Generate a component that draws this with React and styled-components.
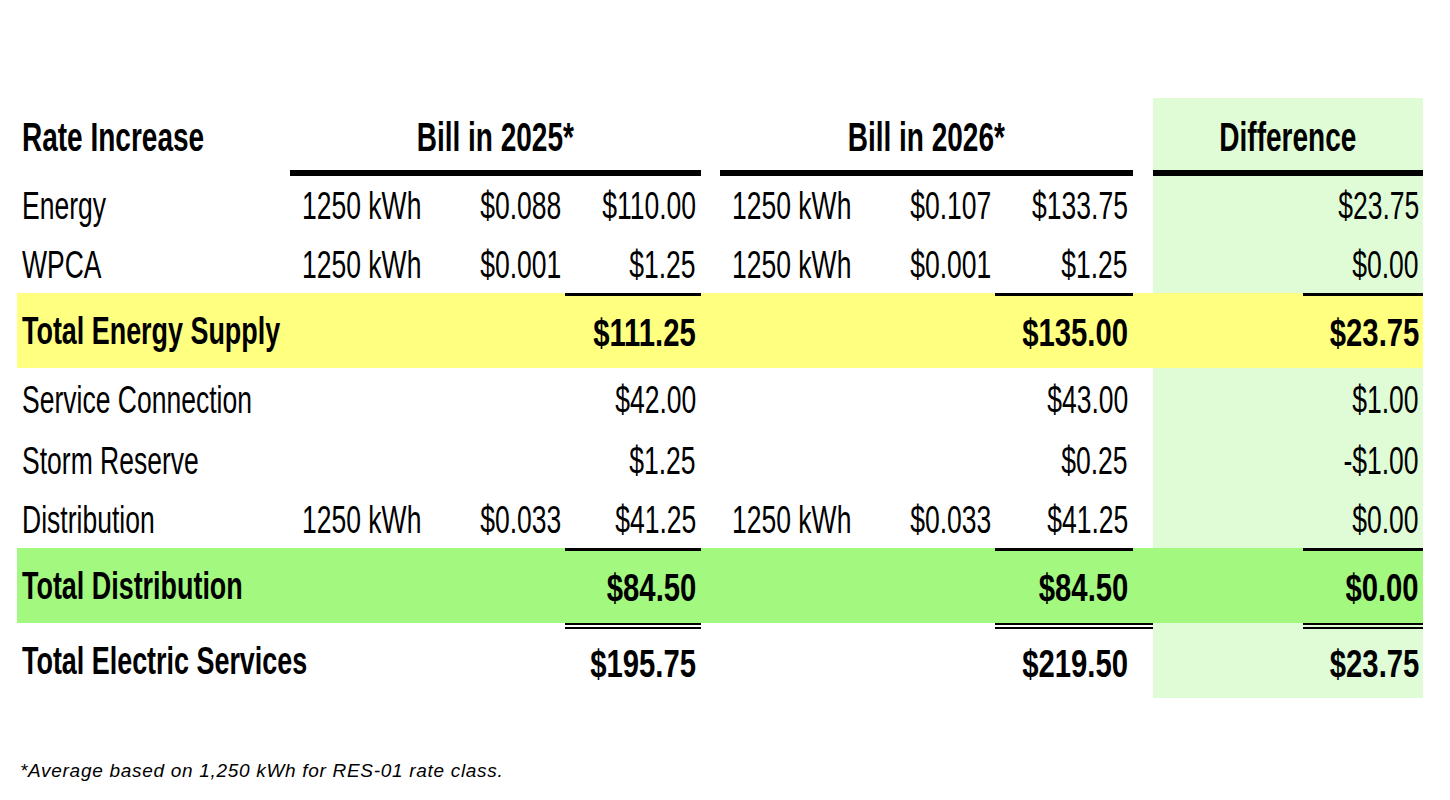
import React from 'react'
import styled, { createGlobalStyle, css } from 'styled-components'

const GlobalStyle = createGlobalStyle`
    html, body {
        margin: 0;
        padding: 0;
        background: #ffffff;
    }
    body {
        font-family: "Liberation Sans", Arial, sans-serif;
        color: #000000;
    }
`

// column tracks: label | kWh rate amount | gap | kWh rate amount | gap | diff-pad diff
const COLUMNS = '273px 140px 135px 136px 19px 140px 135px 138px 20px 150px 120px'

const YELLOW = '#ffff80'
const GREEN = '#a3f880'
const MINT = '#dffcd7'

const Page = styled.div`
    padding: 98px 0 0 17px;
    width: 1406px;
`

const Grid = styled.div`
    display: grid;
    grid-template-columns: ${ COLUMNS };
    height: ${ ( { $height } ) => $height }px;
    background: ${ ( { $fill } ) => $fill || 'transparent' };
`

const Cell = styled.div`
    display: flex;
    align-items: center;
    justify-content: ${ ( { $align } ) => $align == 'right' ? 'flex-end' : $align == 'center' ? 'center' : 'flex-start' };
    padding-left: ${ ( { $padL } ) => $padL || 0 }px;
    padding-right: ${ ( { $padR } ) => $padR || 0 }px;
    grid-column: ${ ( { $col } ) => $col };
    background: ${ ( { $shade } ) => $shade ? MINT : 'transparent' };
    white-space: nowrap;
    min-width: 0;

    ${ ( { $rule } ) => $rule == 'single' && css`
        border-top: 3px solid #000;
    ` }
    ${ ( { $rule } ) => $rule == 'double' && css`
        border-top: 6px double #000;
    ` }
`

const HeadCell = styled( Cell )`
    padding-top: 6px;
    border-bottom: 6px solid ${ ( { $underline } ) => $underline ? '#000' : 'transparent' };
`

// condensed face, done by squeezing a regular sans
const Txt = styled.span`
    display: inline-block;
    font-size: ${ ( { $size } ) => $size || 39 }px;
    font-weight: ${ ( { $bold } ) => $bold ? 700 : 400 };
    line-height: 1;
    transform: scaleX(${ ( { $scale } ) => $scale });
    transform-origin: ${ ( { $align } ) => $align == 'right' ? 'right' : $align == 'center' ? 'center' : 'left' } center;
`

const Footnote = styled.p`
    margin: 62px 0 0 3px;
    font-size: 19px;
    line-height: 22px;
    font-style: italic;
    letter-spacing: 0.7px;
`

const rows = [
    { label: 'Energy', height: 59, y25: [ '1250 kWh', '$0.088', '$110.00' ], y26: [ '1250 kWh', '$0.107', '$133.75' ], diff: '$23.75' },
    { label: 'WPCA', height: 58, y25: [ '1250 kWh', '$0.001', '$1.25' ], y26: [ '1250 kWh', '$0.001', '$1.25' ], diff: '$0.00' },
    { label: 'Total Energy Supply', height: 75, fill: YELLOW, bold: true, rule: 'single', y25: [ '', '', '$111.25' ], y26: [ '', '', '$135.00' ], diff: '$23.75' },
    { label: 'Service Connection', height: 62, y25: [ '', '', '$42.00' ], y26: [ '', '', '$43.00' ], diff: '$1.00' },
    { label: 'Storm Reserve', height: 60, y25: [ '', '', '$1.25' ], y26: [ '', '', '$0.25' ], diff: '-$1.00' },
    { label: 'Distribution', height: 58, y25: [ '1250 kWh', '$0.033', '$41.25' ], y26: [ '1250 kWh', '$0.033', '$41.25' ], diff: '$0.00' },
    { label: 'Total Distribution', height: 75, fill: GREEN, bold: true, rule: 'single', y25: [ '', '', '$84.50' ], y26: [ '', '', '$84.50' ], diff: '$0.00' },
    { label: 'Total Electric Services', height: 75, bold: true, rule: 'double', y25: [ '', '', '$195.75' ], y26: [ '', '', '$219.50' ], diff: '$23.75' },
]

const Label = ( { children, bold } ) =>
    <Txt $bold={ bold } $scale={ bold ? 0.69 : 0.68 } $align="left">{ children }</Txt>

const Num = ( { children, bold, align = 'right' } ) =>
    <Txt $bold={ bold } $scale={ bold ? 0.75 : 0.68 } $align={ align }>{ children }</Txt>

const YearCells = ( { values, start, bold, rule } ) => <>
    <Cell $col={ start } $padL={ 12 }>{ values[0] && <Num align="left">{ values[0] }</Num> }</Cell>
    <Cell $col={ start + 1 } $align="right" $padR={ 4 }>{ values[1] && <Num>{ values[1] }</Num> }</Cell>
    <Cell $col={ start + 2 } $align="right" $padR={ 5 } $rule={ rule }>
        { values[2] && <Num bold={ bold }>{ values[2] }</Num> }
    </Cell>
</>

const Row = ( { row } ) => {
    const { label, height, fill, bold, rule } = row
    return (
        <Grid $height={ height } $fill={ fill }>
            <Cell $col={ 1 } $padL={ 5 }><Label bold={ bold }>{ label }</Label></Cell>
            <YearCells values={ row.y25 } start={ 2 } bold={ bold } rule={ rule } />
            <Cell $col={ 5 } />
            <YearCells values={ row.y26 } start={ 6 } bold={ bold } rule={ rule } />
            <Cell $col={ 9 } $rule={ rule == 'double' ? 'double' : undefined } />
            <Cell $col={ 10 } $shade={ !fill } />
            <Cell $col={ 11 } $shade={ !fill } $align="right" $padR={ 4 } $rule={ rule }>
                <Num bold={ bold }>{ row.diff }</Num>
            </Cell>
        </Grid>
    )
}

const HeaderRow = () =>
    <Grid $height={ 78 }>
        <HeadCell $col={ 1 } $padL={ 5 }>
            <Txt $bold $size={ 40 } $scale={ 0.7 } $align="left">Rate Increase</Txt>
        </HeadCell>
        <HeadCell $col="2 / span 3" $align="center" $underline>
            <Txt $bold $size={ 40 } $scale={ 0.7 } $align="center">Bill in 2025*</Txt>
        </HeadCell>
        <HeadCell $col="6 / span 3" $align="center" $underline>
            <Txt $bold $size={ 40 } $scale={ 0.7 } $align="center">Bill in 2026*</Txt>
        </HeadCell>
        <HeadCell $col="10 / span 2" $align="center" $underline $shade>
            <Txt $bold $size={ 40 } $scale={ 0.7 } $align="center">Difference</Txt>
        </HeadCell>
    </Grid>

export default function App() {
    return (
        <>
            <GlobalStyle />
            <Page>
                <HeaderRow />
                { rows.map( ( row ) => <Row key={ row.label } row={ row } /> ) }
                <Footnote>*Average based on 1,250 kWh for RES-01 rate class.</Footnote>
            </Page>
        </>
    )
}
